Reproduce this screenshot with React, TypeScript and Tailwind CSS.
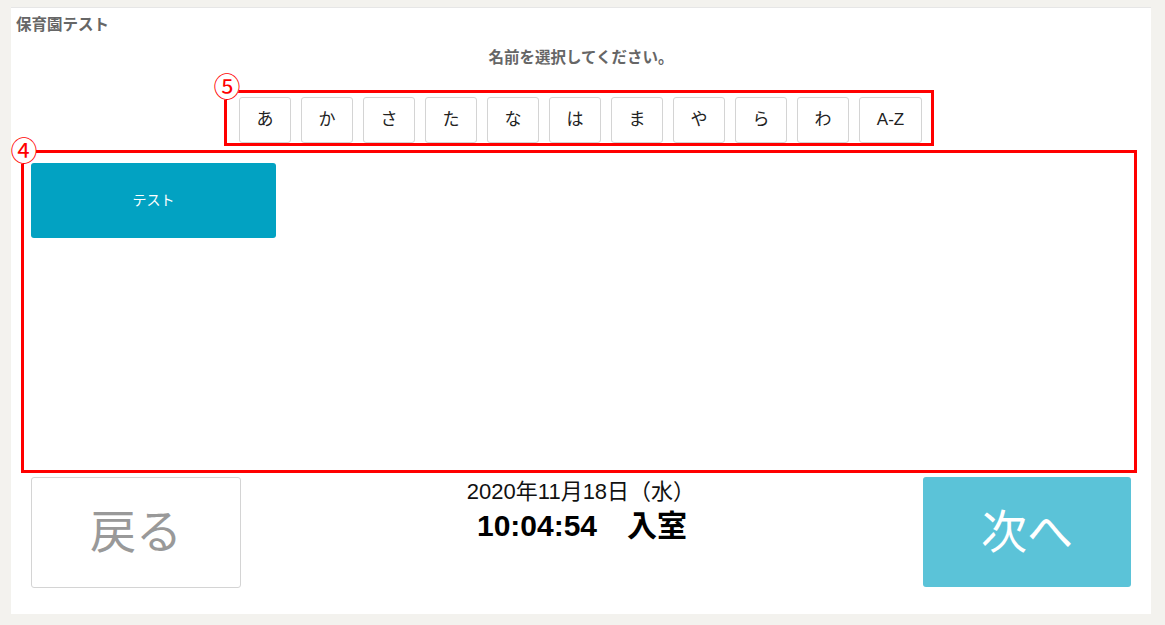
const kana = ["あ", "か", "さ", "た", "な", "は", "ま", "や", "ら", "わ"];

const font = { fontFamily: '"Liberation Sans", "Noto Sans CJK JP", sans-serif' };

export default function App() {
  return (
    <div
      className="w-[1165px] h-[625px] bg-[#f3f2ee] pt-[7px] pl-[11px] pr-[14px] pb-[11px]"
      style={font}
    >
      <div className="relative h-[607px] bg-white border-t border-[#e6e6e6] flex flex-col">
        <div className="pl-[5px] pt-[7px] h-[28px] text-[15.5px] leading-[20px] font-bold text-[#666]">
          保育園テスト
        </div>
        <div className="mt-[12px] h-[20px] text-center text-[15.5px] leading-[20px] font-bold text-[#666]">
          名前を選択してください。
        </div>

        {/* letter filter */}
        <div className="relative mt-[22px] ml-[213px] w-[710px] h-[56px] border-[3px] border-[#ff0000] pl-[12px] pt-[4px]">
          <span className="absolute -left-[12px] -top-[17px] w-[24px] h-[24px] flex items-center justify-center bg-white rounded-full text-[27px] leading-none text-[#ff0000]">
            ⑤
          </span>
          <div className="flex gap-[10px]">
            {kana.map((k) => (
              <button
                key={k}
                className="w-[52px] h-[46px] border border-[#d4d4d4] rounded-[3px] bg-white text-[17px] text-[#222]"
              >
                {k}
              </button>
            ))}
            <button className="w-[63px] h-[46px] border border-[#d4d4d4] rounded-[3px] bg-white text-[17px] text-[#222]">
              A-Z
            </button>
          </div>
        </div>

        {/* name list */}
        <div className="relative mt-[4px] ml-[10px] w-[1116px] h-[323px] border-[3px] border-[#ff0000] pl-[7px] pt-[10px]">
          <span className="absolute -left-[12px] -top-[13px] w-[24px] h-[24px] flex items-center justify-center bg-white rounded-full text-[27px] leading-none text-[#ff0000]">
            ④
          </span>
          <button className="w-[245px] h-[75px] rounded-[3px] bg-[#02a2c2] text-white text-[14px]">
            テスト
          </button>
        </div>

        {/* footer */}
        <div className="mt-[4px] flex items-start pl-[20px] pr-[20px]">
          <button className="w-[210px] h-[111px] border border-[#d4d4d4] rounded-[3px] bg-white text-[46px] text-[#999]">
            戻る
          </button>
          <div className="flex-1 flex flex-col items-center pt-[2px]">
            <div className="text-[22px] leading-[26px] text-[#111] pr-[2px]">2020年11月18日（水）</div>
            <div className="mt-[4px] text-[30px] leading-[34px] font-bold text-[#000]">
              10:04:54　入室
            </div>
          </div>
          <button className="w-[208px] h-[110px] rounded-[3px] bg-[#5bc3d8] text-[46px] text-white">
            次へ
          </button>
        </div>
      </div>
    </div>
  );
}
